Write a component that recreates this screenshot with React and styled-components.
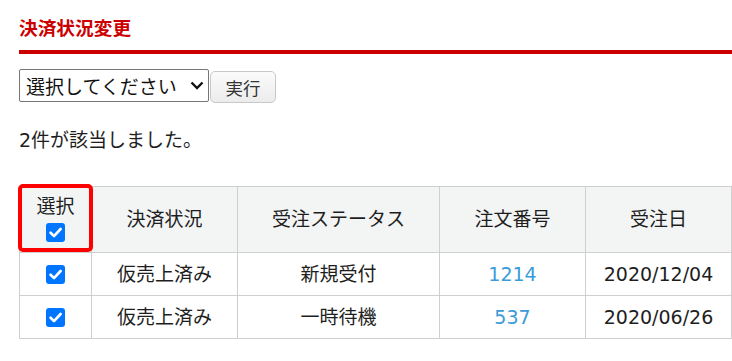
import React from "react";
import styled, { createGlobalStyle } from "styled-components";

const Global = createGlobalStyle`
  html, body { margin: 0; padding: 0; background: #fff; }
  body {
    font-family: "DejaVu Sans", "Noto Sans CJK JP", sans-serif;
    color: #1e1e1e;
    overflow: hidden;
  }
`;

const Page = styled.div`
  padding: 13px 0 0 19px;
  width: 713px;
`;

const Title = styled.h2`
  margin: 0;
  font-family: "Noto Sans CJK JP", sans-serif;
  font-size: 18.7px;
  line-height: 27px;
  font-weight: 700;
  color: #cc0000;
  padding-bottom: 10px;
  border-bottom: 4px solid #cc0000;
  margin-right: -1px;
`;

const Toolbar = styled.div`
  display: flex;
  align-items: flex-start;
  gap: 1px;
  margin-top: 15px;
`;

const SelectBox = styled.div`
  position: relative;
  width: 190px;
  height: 33px;
`;

const Select = styled.select`
  appearance: none;
  width: 100%;
  height: 100%;
  font-family: "Noto Sans CJK JP", sans-serif;
  font-size: 19px;
  color: #111;
  border: 1px solid #767676;
  border-radius: 2px;
  background: #fff;
  padding: 0 0 0 6px;
  margin: 0;
`;

const Chevron = styled.svg`
  position: absolute;
  right: 5px;
  top: 12px;
  width: 14px;
  height: 9px;
  pointer-events: none;
`;

const RunButton = styled.button`
  margin-top: 2px;
  width: 66px;
  height: 32px;
  font-family: "Noto Sans CJK JP", sans-serif;
  font-size: 17.5px;
  color: #333;
  border: 1px solid #c8c8c8;
  border-radius: 5px;
  background: linear-gradient(#fbfbfb, #ececec);
  padding: 0;
`;

const Result = styled.p`
  margin: 24px 0 0;
  font-size: 19px;
  line-height: 27px;
`;

const TableWrap = styled.div`
  position: relative;
  margin-top: 32px;
`;

const Table = styled.table`
  width: 713px;
  border-collapse: collapse;
  table-layout: fixed;
  font-size: 19px;
`;

const Th = styled.th`
  height: 65px;
  padding: 0;
  font-weight: 400;
  background: #f3f4f4;
  border: 1px solid #cfcfcf;
  text-align: center;
  vertical-align: middle;
  line-height: 27px;
`;

const Td = styled.td`
  height: 42px;
  padding: 0;
  border: 1px solid #cfcfcf;
  text-align: center;
  vertical-align: middle;
  line-height: 27px;
  color: ${(p) => (p.$link ? "#3a9bd8" : "#1e1e1e")};
`;

const HeadLabel = styled.div`
  line-height: 27px;
  margin-top: -4px;
`;

const CheckWrap = styled.span`
  position: relative;
  display: block;
  width: 19px;
  height: 19px;
  margin: ${(p) => (p.$head ? "3px auto 0" : "1px auto 0")};
`;

const CheckInput = styled.input.attrs({ type: "checkbox" })`
  appearance: none;
  display: block;
  width: 19px;
  height: 19px;
  margin: 0;
  border-radius: 3px;
  background: #0075ff;
  border: none;
`;

const Tick = styled.svg`
  position: absolute;
  left: 0;
  top: 0;
  width: 19px;
  height: 19px;
  pointer-events: none;
`;

function Check({ head }) {
  return (
    <CheckWrap $head={head}>
      <CheckInput defaultChecked />
      <Tick viewBox="0 0 19 19">
        <path
          d="M4.6 9.8 L8 13.1 L14.6 6"
          fill="none"
          stroke="#fff"
          strokeWidth="2.7"
          strokeLinecap="round"
          strokeLinejoin="round"
        />
      </Tick>
    </CheckWrap>
  );
}

const Highlight = styled.div`
  position: absolute;
  left: -1px;
  top: -2px;
  width: 75px;
  height: 68px;
  box-sizing: border-box;
  border: 4px solid #ff0000;
  border-radius: 5px;
  pointer-events: none;
`;

const rows = [
  { status: "仮売上済み", order: "新規受付", no: "1214", date: "2020/12/04" },
  { status: "仮売上済み", order: "一時待機", no: "537", date: "2020/06/26" },
];

export default function App() {
  return (
    <>
      <Global />
      <Page>
        <Title>決済状況変更</Title>
        <Toolbar>
          <SelectBox>
            <Select defaultValue="">
              <option value="">選択してください</option>
            </Select>
            <Chevron viewBox="0 0 14 9">
              <path
                d="M1.5 1.5 L7 7 L12.5 1.5"
                fill="none"
                stroke="#111"
                strokeWidth="2.4"
              />
            </Chevron>
          </SelectBox>
          <RunButton>実行</RunButton>
        </Toolbar>
        <Result>2件が該当しました。</Result>
        <TableWrap>
          <Table>
            <colgroup>
              <col style={{ width: 72 }} />
              <col style={{ width: 146 }} />
              <col style={{ width: 202 }} />
              <col style={{ width: 146 }} />
              <col style={{ width: 146 }} />
            </colgroup>
            <thead>
              <tr>
                <Th>
                  <HeadLabel>選択</HeadLabel>
                  <Check head />
                </Th>
                <Th>決済状況</Th>
                <Th>受注ステータス</Th>
                <Th>注文番号</Th>
                <Th>受注日</Th>
              </tr>
            </thead>
            <tbody>
              {rows.map((r) => (
                <tr key={r.no}>
                  <Td>
                    <Check />
                  </Td>
                  <Td>{r.status}</Td>
                  <Td>{r.order}</Td>
                  <Td $link>{r.no}</Td>
                  <Td>{r.date}</Td>
                </tr>
              ))}
            </tbody>
          </Table>
          <Highlight />
        </TableWrap>
      </Page>
    </>
  );
}
